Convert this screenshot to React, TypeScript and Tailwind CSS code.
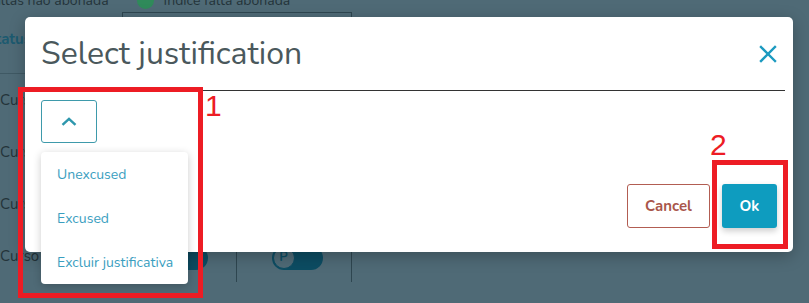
import React from "react";

const font = { fontFamily: '"Nunito", "Lato", "Noto Sans", sans-serif' };

function Toggle() {
  return (
    <div className="w-[51px] h-[24px] rounded-full bg-[#0c4c62] flex items-center pl-[1px]">
      <div className="w-[22px] h-[22px] rounded-full bg-[#4f6a76] border border-[#0c4c62] flex items-center justify-center text-[13px] font-bold text-[#0c4c62]">
        P
      </div>
    </div>
  );
}

function BackgroundPage() {
  const rows = [0, 1, 2, 3];
  return (
    <div className="flex flex-col w-full h-full text-[#24343a]" style={font}>
      <div className="flex items-center h-[12px] -mt-[6px] text-[14px] gap-[10px]">
        <span className="-ml-[14px]">Faltas não abonada</span>
        <span className="w-[17px] h-[17px] rounded-full bg-[#2f8a5a] ml-[18px]" />
        <span>Índice falta abonada</span>
      </div>
      <div className="flex h-[68px]">
        <div className="w-[122px] border-b border-[#3f5964] flex items-center">
          <span className="-ml-[14px] font-bold text-[15px] text-[#1c5a70]">Status</span>
        </div>
        <div className="w-[230px] mt-[6px] border border-[#2e4650] border-b-0" />
      </div>
      {rows.map((r) => (
        <div key={r} className="flex h-[52px]">
          <div className="w-[122px] flex items-center text-[15px] border-r border-[#2e4650]">Curso</div>
          <div className="w-[115px] flex items-center justify-center border-r border-[#2e4650]">
            {r === 3 && <div className="ml-[6px] mt-[4px]"><Toggle /></div>}
          </div>
          <div className="w-[115px] flex items-center justify-center border-r border-[#2e4650]">
            {r === 3 && <div className="ml-[6px] mt-[4px]"><Toggle /></div>}
          </div>
        </div>
      ))}
    </div>
  );
}

export default function App() {
  return (
    <div className="relative w-[809px] h-[303px] overflow-hidden bg-[#4f6a76]">
      <BackgroundPage />

      {/* modal */}
      <div
        className="absolute left-[25px] top-[17px] w-[768px] h-[235px] bg-white rounded-[5px] shadow-[0_4px_16px_rgba(0,0,0,0.25)] flex flex-col"
        style={font}
      >
        <div className="flex items-center justify-between h-[74px] mx-[8px] px-[9px] border-b border-[#333]">
          <h1 className="text-[32px] text-[#4a585c] leading-[40px] -ml-[1px] whitespace-nowrap">Select justification</h1>
          <svg width="18" height="18" viewBox="0 0 18 18" className="mr-[-1px]">
            <path d="M2 2 L16 16 M16 2 L2 16" stroke="#1b9ac0" strokeWidth="2.4" strokeLinecap="square" />
          </svg>
        </div>
        <div className="px-[16px] pt-[9px]">
          <button className="w-[56px] h-[43px] border border-[#3e9aab] rounded-[3px] flex items-center justify-center">
            <svg width="16" height="9" viewBox="0 0 16 9">
              <path d="M1.5 7.8 L8 1.8 L14.5 7.8" stroke="#2e97ad" strokeWidth="2.4" fill="none" />
            </svg>
          </button>
        </div>
        <div className="flex justify-end gap-[12px] px-[16px] mt-[41px]">
          <button className="w-[83px] h-[44px] border border-[#b25d52] rounded-[3px] text-[#a9564b] font-bold text-[15px]">
            Cancel
          </button>
          <button className="w-[55px] h-[44px] rounded-[3px] bg-[#0e9cbf] text-white font-bold text-[15px] shadow-[0_3px_6px_rgba(0,0,0,0.2)]">
            Ok
          </button>
        </div>
      </div>

      {/* dropdown menu */}
      <div
        className="absolute left-[41px] top-[152px] w-[147px] bg-white rounded-[4px] shadow-[0_2px_8px_rgba(0,0,0,0.2)] flex flex-col"
        style={font}
      >
        {["Unexcused", "Excused", "Excluir justificativa"].map((t) => (
          <div key={t} className="h-[44px] flex items-center pl-[16px] text-[14px] text-[#3a9ec0] whitespace-nowrap">
            {t}
          </div>
        ))}
      </div>

      {/* annotations */}
      <div className="absolute left-[18px] top-[87px] w-[185px] h-[211px] border-[5px] border-[#ed1c24]" />
      <div
        className="absolute left-[205px] top-[91px] text-[30px] leading-[30px] text-[#ed1c24]"
        style={{ fontFamily: '"Liberation Sans", Arial, sans-serif' }}
      >
        1
      </div>
      <div className="absolute left-[712px] top-[160px] w-[76px] h-[89px] border-[5px] border-[#ed1c24]" />
      <div
        className="absolute left-[710px] top-[130px] text-[30px] leading-[30px] text-[#ed1c24]"
        style={{ fontFamily: '"Liberation Sans", Arial, sans-serif' }}
      >
        2
      </div>
    </div>
  );
}
